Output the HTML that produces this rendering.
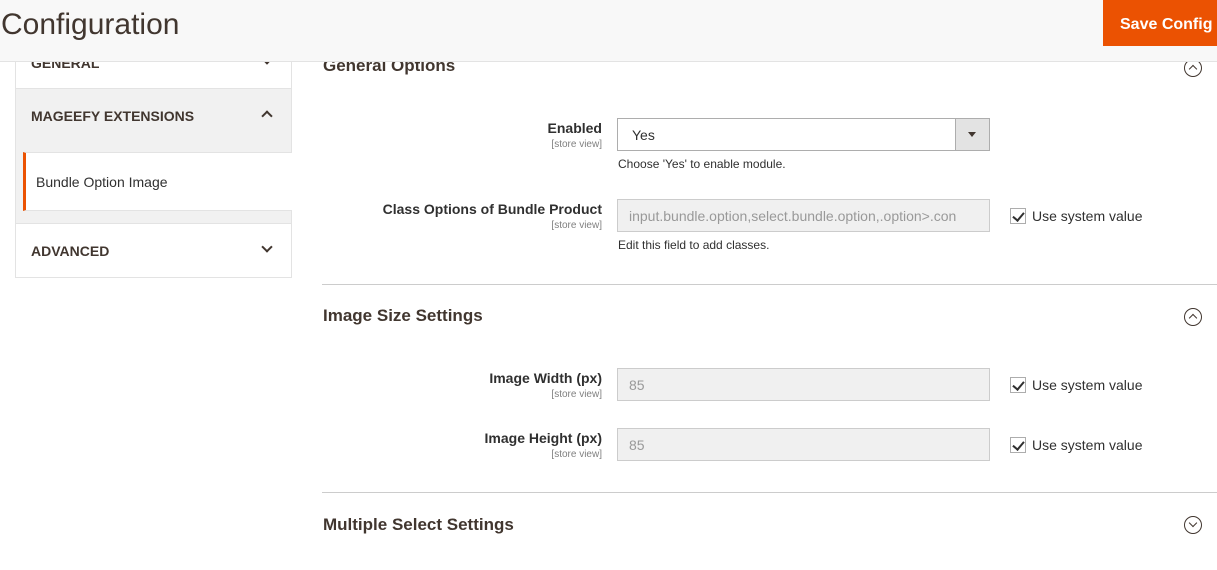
<!DOCTYPE html>
<html><head><meta charset="utf-8"><style>
*{box-sizing:border-box;margin:0;padding:0}
body{width:1217px;height:570px;overflow:hidden;background:#fff;font-family:"Liberation Sans",sans-serif;color:#303030;position:relative}
.abs{position:absolute}
.hdr{left:0;top:0;width:1217px;height:62px;background:#f8f8f8;border-bottom:1px solid #e3e3e3;z-index:5}
.hdr h1{position:absolute;left:1px;top:8px;font-size:30px;font-weight:normal;color:#41362f}
.save{position:absolute;left:1103px;top:0;width:114px;height:46px;background:#eb5202;color:#fff;font-size:16px;font-weight:bold;padding:16px 0 0 17px;white-space:nowrap}
.side{left:15px;width:277px;border:1px solid #e3e3e3;font-weight:bold;font-size:14px;color:#41362f}
.chev{position:absolute;right:20px;width:8px;height:8px;border-right:2px solid #41362f;border-bottom:2px solid #41362f}
.lbl{position:absolute;right:615px;text-align:right;font-size:14px;font-weight:bold;color:#303030}
.sv{display:block;font-size:10px;font-weight:normal;color:#808080;margin-top:3px}
.inp{position:absolute;left:617px;width:373px;height:33px;border:1px solid #adadad;font-size:14px;padding:8px 11px;white-space:nowrap;overflow:hidden}
.dis{background:#f0f0f0;border-color:#ccc;color:#999}
.note{position:absolute;left:618px;font-size:12px;color:#303030}
.cb{position:absolute;left:1010px;width:16px;height:16px;border:1px solid #adadad;background:#fff}
.cb:after{content:"";position:absolute;left:4px;top:1px;width:5px;height:9px;border-right:2px solid #303030;border-bottom:2px solid #303030;transform:rotate(40deg)}
.usv{position:absolute;left:1032px;font-size:14px;color:#303030}
.sec{position:absolute;left:323px;font-size:17px;font-weight:bold;color:#41362f}
.circ{position:absolute;left:1184px;width:18px;height:18px;border:1px solid #41362f;border-radius:50%}
.circ:after{content:"";position:absolute;left:5px;width:5px;height:5px;border-left:1.5px solid #41362f;border-top:1.5px solid #41362f}
.up:after{top:6px;transform:rotate(45deg)}
.dn:after{top:3px;transform:rotate(225deg)}
.hr{position:absolute;left:322px;width:895px;height:1px;background:#ccc}
</style></head><body>
<div class="abs hdr"><h1>Configuration</h1><div class="save">Save Config</div></div>

<div class="abs side" style="top:20px;height:69px;border-top:none"><span class="abs" style="left:15px;top:35px">GENERAL</span><div class="chev" style="top:35px;transform:rotate(45deg)"></div></div>
<div class="abs side" style="top:88px;height:55px;background:#f1f1f1"><span class="abs" style="left:15px;top:19px">MAGEEFY EXTENSIONS</span><div class="chev" style="top:23px;transform:rotate(225deg)"></div></div>
<div class="abs" style="left:15px;top:142px;width:277px;height:82px;background:#f1f1f1;border-left:1px solid #e3e3e3;border-right:1px solid #e3e3e3"></div>
<div class="abs" style="left:23px;top:152px;width:269px;height:59px;background:#fff;border-left:3px solid #eb5202;border-top:1px solid #e3e3e3;border-bottom:1px solid #e3e3e3;font-size:14px;color:#303030;padding:21px 0 0 10px">Bundle Option Image</div>
<div class="abs side" style="top:223px;height:55px;background:#fff"><span class="abs" style="left:15px;top:19px">ADVANCED</span><div class="chev" style="top:19px;transform:rotate(45deg)"></div></div>

<div class="sec" style="top:56px">General Options</div>
<div class="circ up" style="top:59px"></div>

<div class="lbl" style="top:120px">Enabled<span class="sv">[store view]</span></div>
<div class="inp" style="top:118px;padding-left:14px">Yes<div style="position:absolute;right:0;top:0;width:34px;height:31px;background:#e3e3e3;border-left:1px solid #adadad"><div style="position:absolute;left:12px;top:13px;border-left:4px solid transparent;border-right:4px solid transparent;border-top:5px solid #41362f"></div></div></div>
<div class="note" style="top:157px">Choose 'Yes' to enable module.</div>

<div class="lbl" style="top:201px">Class Options of Bundle Product<span class="sv">[store view]</span></div>
<div class="inp dis" style="top:199px">input.bundle.option,select.bundle.option,.option&gt;.con</div>
<div class="note" style="top:238px">Edit this field to add classes.</div>
<div class="cb" style="top:208px"></div><div class="usv" style="top:208px">Use system value</div>

<div class="hr" style="top:284px"></div>
<div class="sec" style="top:306px">Image Size Settings</div>
<div class="circ up" style="top:308px"></div>

<div class="lbl" style="top:370px">Image Width (px)<span class="sv">[store view]</span></div>
<div class="inp dis" style="top:368px">85</div>
<div class="cb" style="top:377px"></div><div class="usv" style="top:377px">Use system value</div>

<div class="lbl" style="top:430px">Image Height (px)<span class="sv">[store view]</span></div>
<div class="inp dis" style="top:428px">85</div>
<div class="cb" style="top:437px"></div><div class="usv" style="top:437px">Use system value</div>

<div class="hr" style="top:492px"></div>
<div class="sec" style="top:515px">Multiple Select Settings</div>
<div class="circ dn" style="top:516px"></div>
</body></html>
